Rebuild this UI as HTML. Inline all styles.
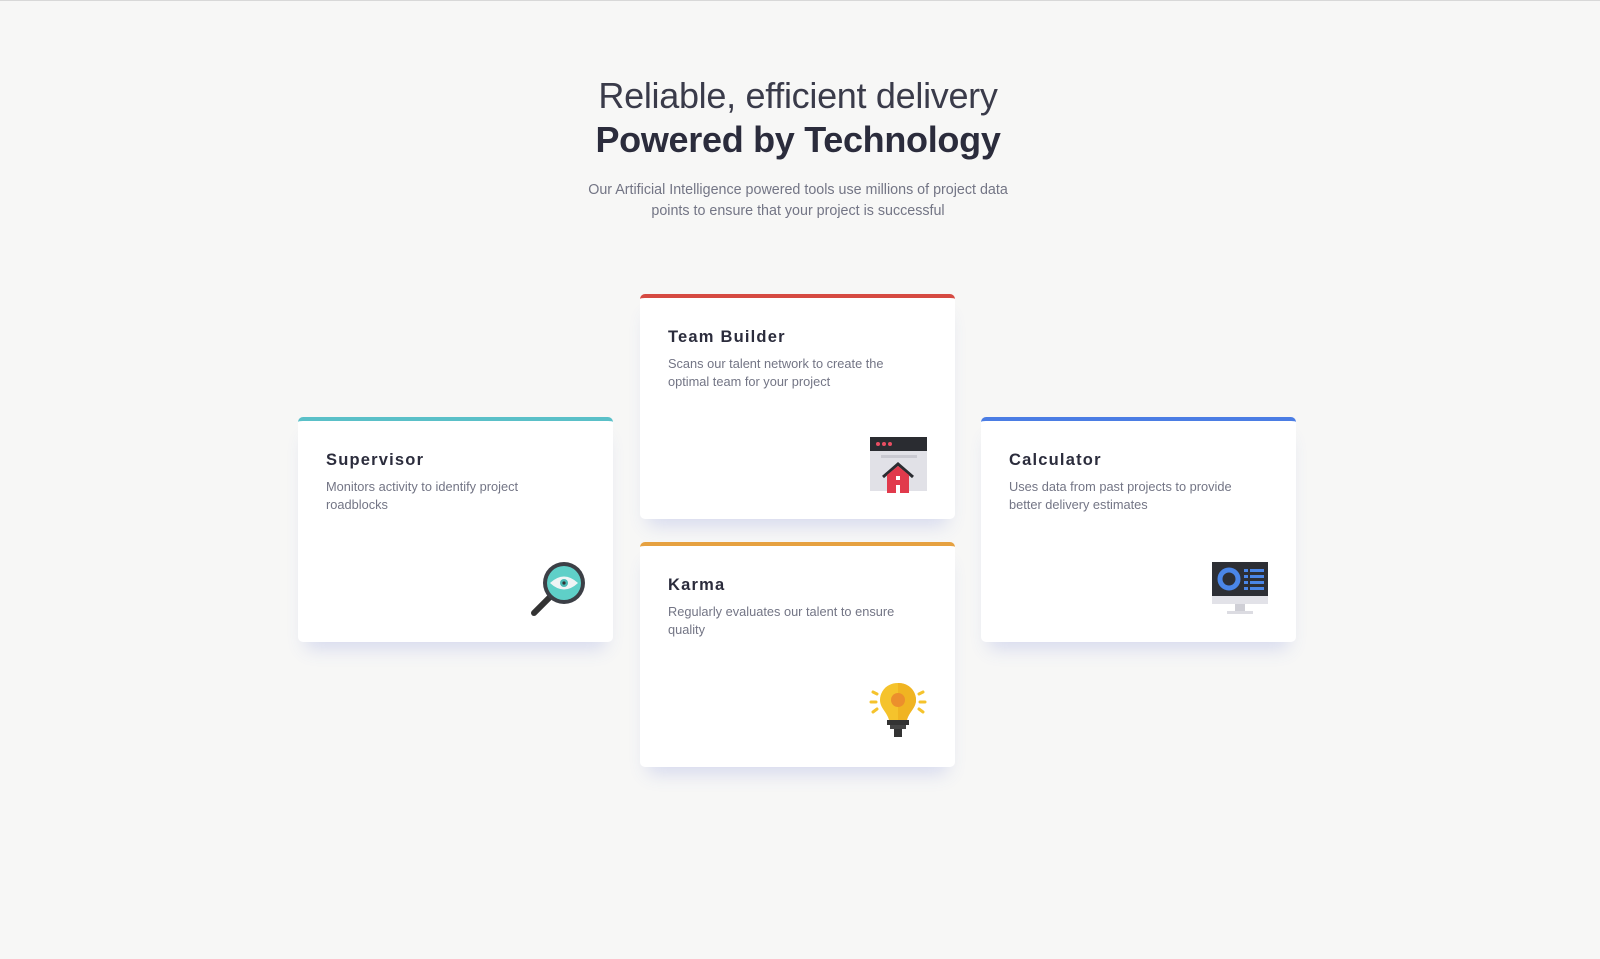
<!DOCTYPE html>
<html><head><meta charset="utf-8"><style>
html,body{margin:0;padding:0}
body{width:1600px;height:959px;background:#f7f7f6;font-family:"Liberation Sans",sans-serif;position:relative;overflow:hidden;border-top:1px solid #d8d8d8;box-sizing:border-box}
h1{position:absolute;left:0;width:1596px;text-align:center;margin:0;color:#2b2c3c}
.l1{top:74px;font-size:36px;font-weight:300;letter-spacing:-0.3px;color:#3a3b4a}
.l2{top:118px;font-size:36px;font-weight:700;letter-spacing:-0.3px}
.p{position:absolute;top:179px;left:568px;width:460px;text-align:center;color:#737585;font-size:14.3px;line-height:20.5px}
.card{position:absolute;width:315px;height:225px;background:#fff;border-radius:5px;box-shadow:0 14px 18px -8px rgba(73,93,207,0.2);box-sizing:border-box;border-top:4px solid}
.card h3{position:absolute;left:28px;top:30px;margin:0;font-size:16.5px;font-weight:700;color:#2b2c3c;letter-spacing:1.2px}
.card p{position:absolute;left:28px;top:57px;margin:0;width:245px;font-size:12.8px;line-height:18px;color:#737585}
.card svg{position:absolute}
</style></head><body>
<h1 class="l1">Reliable, efficient delivery</h1>
<h1 class="l2">Powered by Technology</h1>
<div class="p">Our Artificial Intelligence powered tools use millions of project data points to ensure that your project is successful</div>

<div class="card" style="left:298px;top:416px;border-color:#5ac0c8">
<h3>Supervisor</h3><p>Monitors activity to identify project roadblocks</p>
<svg style="left:230px;top:137px" width="60" height="60" viewBox="0 0 60 60">
<line x1="6" y1="55" x2="26" y2="35" stroke="#333" stroke-width="6" stroke-linecap="round"/>
<circle cx="36" cy="25" r="21" fill="#3c3f46"/><circle cx="36" cy="25" r="17" fill="#5fd0c8"/>
<path d="M22 25 Q36 12 50 25 Q36 38 22 25Z" fill="#f0f4f5"/><circle cx="36" cy="25" r="4" fill="#4bbab4"/><circle cx="36" cy="25" r="1.6" fill="#333"/>
</svg></div>

<div class="card" style="left:640px;top:293px;border-color:#d64a42">
<h3>Team Builder</h3><p>Scans our talent network to create the optimal team for your project</p>
<svg style="left:230px;top:137px" width="58" height="60" viewBox="0 0 58 60">
<rect x="0" y="2" width="57" height="14" fill="#2a2c31"/><rect x="0" y="16" width="57" height="40" fill="#e1e1e7"/>
<circle cx="8" cy="9" r="2" fill="#e94e62"/><circle cx="14" cy="9" r="2" fill="#e94e62"/><circle cx="20" cy="9" r="2" fill="#e94e62"/>
<rect x="11" y="20" width="36" height="3" fill="#c9c9d1"/>
<path d="M13 42 L28 29 L43 42" fill="none" stroke="#2a2c31" stroke-width="3"/>
<path d="M17 40 L28 31 L39 40 V58 H17Z" fill="#e13a4c"/><rect x="26" y="41" width="4" height="4" fill="#fff"/><rect x="26" y="50" width="4" height="8" fill="#fff"/>
</svg></div>

<div class="card" style="left:640px;top:541px;border-color:#e6a140">
<h3>Karma</h3><p>Regularly evaluates our talent to ensure quality</p>
<svg style="left:227px;top:134px" width="62" height="62" viewBox="0 0 62 62">
<g stroke="#f5c32c" stroke-width="3" stroke-linecap="round"><line x1="6" y1="12" x2="10" y2="14"/><line x1="4" y1="22" x2="9" y2="22"/><line x1="6" y1="32" x2="10" y2="29"/><line x1="56" y1="12" x2="52" y2="14"/><line x1="58" y1="22" x2="53" y2="22"/><line x1="56" y1="32" x2="52" y2="29"/></g>
<path d="M31 3 C19 3 13 12 13 20 C13 28 20 32 22 40 H40 C42 32 49 28 49 20 C49 12 43 3 31 3Z" fill="#f5c32c"/>
<path d="M31 3 C43 3 49 12 49 20 C49 28 42 32 40 40 H31Z" fill="#f0b422"/>
<circle cx="31" cy="20" r="7" fill="#ec8f2c"/>
<rect x="20" y="40" width="22" height="5" fill="#333"/><rect x="23" y="45" width="16" height="4" fill="#444"/><rect x="27" y="49" width="8" height="8" fill="#333"/>
</svg></div>

<div class="card" style="left:981px;top:416px;border-color:#4b7de4">
<h3>Calculator</h3><p>Uses data from past projects to provide better delivery estimates</p>
<svg style="left:230px;top:137px" width="58" height="60" viewBox="0 0 58 60">
<rect x="1" y="4" width="56" height="34" fill="#2d2f35"/><rect x="1" y="38" width="56" height="8" fill="#e2e2e8"/>
<rect x="24" y="46" width="10" height="7" fill="#cfcfd6"/><rect x="16" y="53" width="26" height="3" fill="#dcdce2"/>
<circle cx="18" cy="21" r="9" fill="none" stroke="#4a86e8" stroke-width="5"/>
<g fill="#4a86e8"><rect x="33" y="11" width="4" height="3"/><rect x="39" y="11" width="14" height="3"/><rect x="33" y="17" width="4" height="3"/><rect x="39" y="17" width="14" height="3"/><rect x="33" y="23" width="4" height="3"/><rect x="39" y="23" width="14" height="3"/><rect x="33" y="29" width="4" height="3"/><rect x="39" y="29" width="14" height="3"/></g>
</svg></div>
</body></html>
